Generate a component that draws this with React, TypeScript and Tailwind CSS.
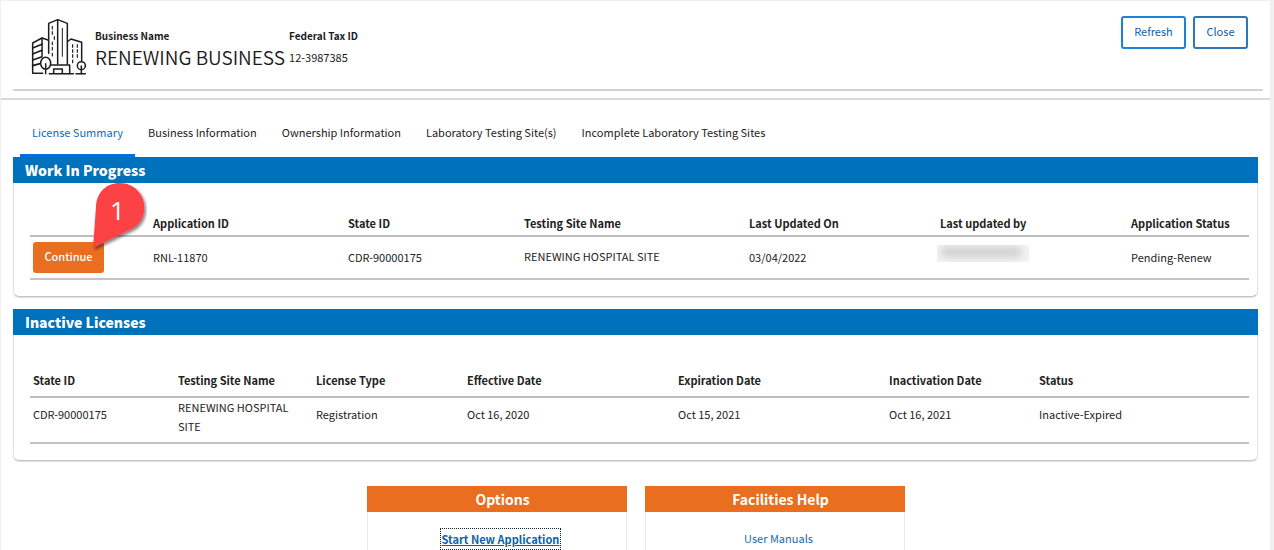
import type { ReactNode } from "react";

type Column = { label: string; width: string };

const tabs = [
  "License Summary",
  "Business Information",
  "Ownership Information",
  "Laboratory Testing Site(s)",
  "Incomplete Laboratory Testing Sites",
];

const progressColumns: Column[] = [
  { label: "", width: "w-[120px]" },
  { label: "Application ID", width: "w-[195px]" },
  { label: "State ID", width: "w-[176px]" },
  { label: "Testing Site Name", width: "w-[225px]" },
  { label: "Last Updated On", width: "w-[191px]" },
  { label: "Last updated by", width: "w-[191px]" },
  { label: "Application Status", width: "w-[121px]" },
];

const inactiveColumns: Column[] = [
  { label: "State ID", width: "w-[145px]" },
  { label: "Testing Site Name", width: "w-[138px]" },
  { label: "License Type", width: "w-[151px]" },
  { label: "Effective Date", width: "w-[211px]" },
  { label: "Expiration Date", width: "w-[211px]" },
  { label: "Inactivation Date", width: "w-[150px]" },
  { label: "Status", width: "w-[213px]" },
];

const inactiveLicense = [
  "CDR-90000175",
  "RENEWING HOSPITAL SITE",
  "Registration",
  "Oct 16, 2020",
  "Oct 15, 2021",
  "Oct 16, 2021",
  "Inactive-Expired",
];

function BuildingsIcon() {
  return (
    <svg
      viewBox="30 21 168 177"
      className="h-[59px] w-14 shrink-0"
      fill="none"
      stroke="#1c1c1c"
      strokeWidth="4.5"
      strokeLinejoin="round"
      strokeLinecap="round"
      aria-hidden="true"
    >
      <path d="M86 130V40L113 29L142 40V162" />
      <path d="M113 29V162" />
      <path d="M127 55V139" strokeWidth="3" />
      <path d="M97 49v8M97 65v8M103 80v8M97 96v8M97 112v8M97 130v8" strokeWidth="3.5" />
      <path d="M84 90L66 84L38 99V190H68" />
      <path d="M66 84V140" />
      <path d="M38 114L66 103M38 132L66 121M38 150L64 141M38 167L60 161" strokeWidth="5" />
      <path d="M145 93L153 87L185 97V152" />
      <path d="M158 104v8M172 104v8M158 119v8M172 119v8M158 134v8M172 134v8M158 150v8" strokeWidth="3.5" />
      <path d="M94 165H149V190M101 190V177H127V190" />
      <ellipse cx="77" cy="160" rx="15" ry="18" fill="#fff" />
      <path d="M77 161V191" />
      <circle cx="184" cy="167" r="12" fill="#fff" />
      <path d="M184 168V191" />
      <path d="M88 191H160M168 191H196" />
    </svg>
  );
}

function StepPin() {
  return (
    <svg
      viewBox="0 0 180 234"
      className="pointer-events-none absolute -top-[62px] left-[54px] h-[78px] w-[60px]"
      aria-hidden="true"
    >
      <defs>
        <filter id="pin-shadow" x="-20%" y="-20%" width="150%" height="150%">
          <feDropShadow dx="5" dy="6" stdDeviation="5" floodColor="#000" floodOpacity="0.5" />
        </filter>
      </defs>
      <path
        d="M18 204L27 80C29 36 59 9 98 9C140 9 172 42 172 82C172 116 154 138 132 148Z"
        fill="#fd4245"
        filter="url(#pin-shadow)"
      />
      <text x="91" y="120" textAnchor="middle" fill="#fff" fontSize="78" fontFamily="'Open Sans', sans-serif">
        1
      </text>
    </svg>
  );
}

function Panel({ title, children }: { title: string; children: ReactNode }) {
  return (
    <section className="rounded-b-md border border-t-0 border-[#e2e2e2] border-b-[#c4c4c4] pb-4 shadow-[0_1px_1px_rgba(0,0,0,0.12)]">
      <h2 className="-mx-px h-[26px] bg-[#0071bc] px-3 text-[14px] leading-[26px] font-black text-white">{title}</h2>
      <div className="pr-2 pl-4">{children}</div>
    </section>
  );
}

function HeadRow({ columns, className }: { columns: Column[]; className: string }) {
  return (
    <thead>
      <tr className="border-b-2 border-[#bdbdbd]">
        {columns.map((c) => (
          <th key={c.label} scope="col" className={`${c.width} ${className} px-[3px] text-left align-bottom font-bold whitespace-nowrap`}>
            {c.label}
          </th>
        ))}
      </tr>
    </thead>
  );
}

function Card({ title, children }: { title: string; children: ReactNode }) {
  return (
    <section className="w-[260px] border border-t-0 border-[#e8e8e8] pb-6 text-center">
      <h2 className="-mx-px h-[26px] bg-[#e96e20] pl-3 text-[14px] leading-[26px] font-bold text-white">{title}</h2>
      <div className="pt-4 pl-2">{children}</div>
    </section>
  );
}

export default function App() {
  return (
    <div className="h-screen overflow-hidden border-t border-r-4 border-l border-[#f0f0f0] bg-white font-['Noto_Sans_CJK_SC','Open_Sans',sans-serif] text-[11px] leading-5 text-[#222]">
      <header className="border-b-2 border-[#d9d9d9] pr-[7px] pb-[7px] pl-3">
        <div className="flex h-[90px] items-start border-b-2 border-[#d3d3d3] pr-[15px] pl-[17px]">
          <div className="pt-4">
            <BuildingsIcon />
          </div>
          <dl className="flex gap-1 pt-[25px] pl-[9px] text-[#1a1a1a]">
            <div>
              <dt className="text-[10px] font-bold">Business Name</dt>
              <dd className="text-[19px] leading-[22px] font-[350] whitespace-nowrap">RENEWING BUSINESS</dd>
            </div>
            <div>
              <dt className="text-[10px] font-bold">Federal Tax ID</dt>
              <dd className="text-[11px] leading-[22px]">12-3987385</dd>
            </div>
          </dl>
          <div className="ml-auto flex gap-[7px] pt-[15px] text-[#0a5fa8]">
            <button type="button" className="h-[33px] w-[65px] rounded-[3px] border-2 border-[#1a83d8] pb-1">
              Refresh
            </button>
            <button type="button" className="h-[33px] w-[55px] rounded-[3px] border-2 border-[#2a78b8] pb-1">
              Close
            </button>
          </div>
        </div>
      </header>

      <main className="pr-3 pl-3">
        <nav className="flex gap-px pt-[18px] pl-[7px]">
          {tabs.map((tab, i) => (
            <a
              key={tab}
              href="#"
              aria-current={i === 0 ? "page" : undefined}
              className={
                i === 0
                  ? "h-[39px] border-b-[3px] border-[#0070e0] px-3 pt-1 text-[#0b6cb8]"
                  : "h-[39px] px-3 pt-1"
              }
            >
              {tab}
            </a>
          ))}
        </nav>

        <Panel title="Work In Progress">
          <table className="w-full table-fixed border-collapse">
            <HeadRow columns={progressColumns} className="h-[53px] pb-[2px]" />
            <tbody>
              <tr className="h-[43px] border-b-2 border-[#c4c4c4]">
                <td className="px-[3px]">
                  <div className="relative">
                    <button type="button" className="block h-[31px] w-[71px] rounded-[3px] bg-[#e96e20] pb-1 font-medium text-white">
                      Continue
                    </button>
                    <StepPin />
                  </div>
                </td>
                <td className="px-[3px] pb-[2px]">RNL-11870</td>
                <td className="px-[3px] pb-[2px]">CDR-90000175</td>
                <td className="px-[3px] pb-1">RENEWING HOSPITAL SITE</td>
                <td className="px-[3px] pb-[2px]">03/04/2022</td>
                <td className="pb-[9px]">
                  <div className="h-[17px] w-[92px] overflow-hidden bg-[#f4f4f4] pt-[2px] pl-1">
                    <div className="h-[10px] w-20 bg-[#cccccc] blur-[4px]" />
                  </div>
                </td>
                <td className="px-[3px] pb-[2px]">Pending-Renew</td>
              </tr>
            </tbody>
          </table>
        </Panel>

        <div className="pt-3">
          <Panel title="Inactive Licenses">
            <table className="w-full table-fixed border-collapse">
              <HeadRow columns={inactiveColumns} className="h-[62px] pb-[6px]" />
              <tbody>
                <tr className="h-[46px] border-b-2 border-[#c4c4c4]">
                  {inactiveLicense.map((value, i) => (
                    <td
                      key={inactiveColumns[i].label}
                      className={i === 1 ? "px-[3px] pb-[6px] leading-[19px]" : "px-[3px] pb-3 leading-[19px]"}
                    >
                      {value}
                    </td>
                  ))}
                </tr>
              </tbody>
            </table>
          </Panel>
        </div>

        <div className="flex justify-center gap-[18px] pt-[25px]">
          <Card title="Options">
            <a href="#" className="inline-block border border-dotted border-[#123] px-px font-bold text-[#0b62a8] underline">
              Start New Application
            </a>
          </Card>
          <Card title="Facilities Help">
            <a href="#" className="inline-block text-[#1b69a8]">
              User Manuals
            </a>
          </Card>
        </div>
      </main>
    </div>
  );
}
